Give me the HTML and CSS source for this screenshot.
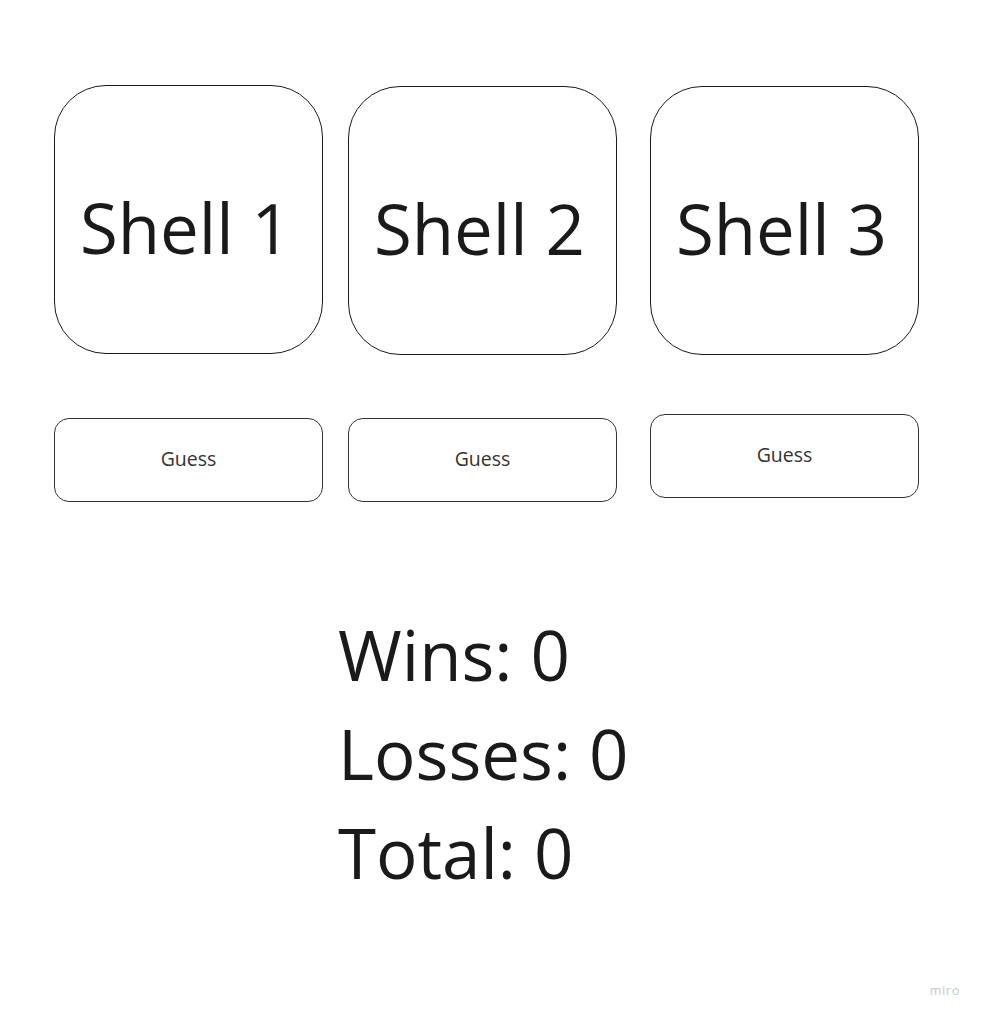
FILE: index.html
```html
<!DOCTYPE html>
<html>
<head>
<meta charset="utf-8">
<link rel="stylesheet" href="styles.css">
</head>
<body>
<div class="page">
  <div class="row shells">
    <div class="shell s1">Shell 1</div>
    <div class="shell s2">Shell 2</div>
    <div class="shell s3">Shell 3</div>
  </div>
  <div class="row guesses">
    <div class="guess g1">Guess</div>
    <div class="guess g2">Guess</div>
    <div class="guess g3">Guess</div>
  </div>
  <div class="stats">
    <div class="stat">Wins: 0</div>
    <div class="stat">Losses: 0</div>
    <div class="stat">Total: 0</div>
  </div>
  <div class="miro">miro</div>
</div>
</body>
</html>
```
FILE: styles.css
```css
html, body {
  margin: 0;
  padding: 0;
  background: #ffffff;
}
.page {
  position: relative;
  width: 982px;
  height: 1017px;
  font-family: "Open Sans", "Liberation Sans", sans-serif;
  color: #1a1a1a;
  overflow: hidden;
}
.row {
  display: flex;
  align-items: flex-start;
  padding-left: 54px;
}
.shells {
  padding-top: 85px;
}
.shell {
  width: 269px;
  height: 269px;
  box-sizing: border-box;
  border: 1px solid #1a1a1a;
  border-radius: 52px;
  display: flex;
  align-items: center;
  justify-content: center;
  font-size: 69px;
  padding-top: 14px;
  padding-right: 6px;
}
.s2 { margin-left: 25px; margin-top: 1px; }
.s3 { margin-left: 33px; margin-top: 1px; }
.guesses {
  padding-top: 63px;
}
.guess {
  width: 269px;
  height: 84px;
  box-sizing: border-box;
  border: 1px solid #333;
  border-radius: 15px;
  display: flex;
  align-items: center;
  justify-content: center;
  font-size: 19.5px;
  color: #333;
  padding-bottom: 4px;
  padding-right: 0;
}
.g2 { margin-left: 25px; }
.g3 { margin-left: 33px; margin-top: -4px; }
.stats {
  padding-left: 338px;
  padding-top: 103px;
}
.stat {
  font-size: 69px;
  line-height: 99px;
}
.miro {
  position: absolute;
  right: 22px;
  bottom: 18px;
  font-size: 13px;
  color: #c9c9cf;
  letter-spacing: 0.5px;
}
```
